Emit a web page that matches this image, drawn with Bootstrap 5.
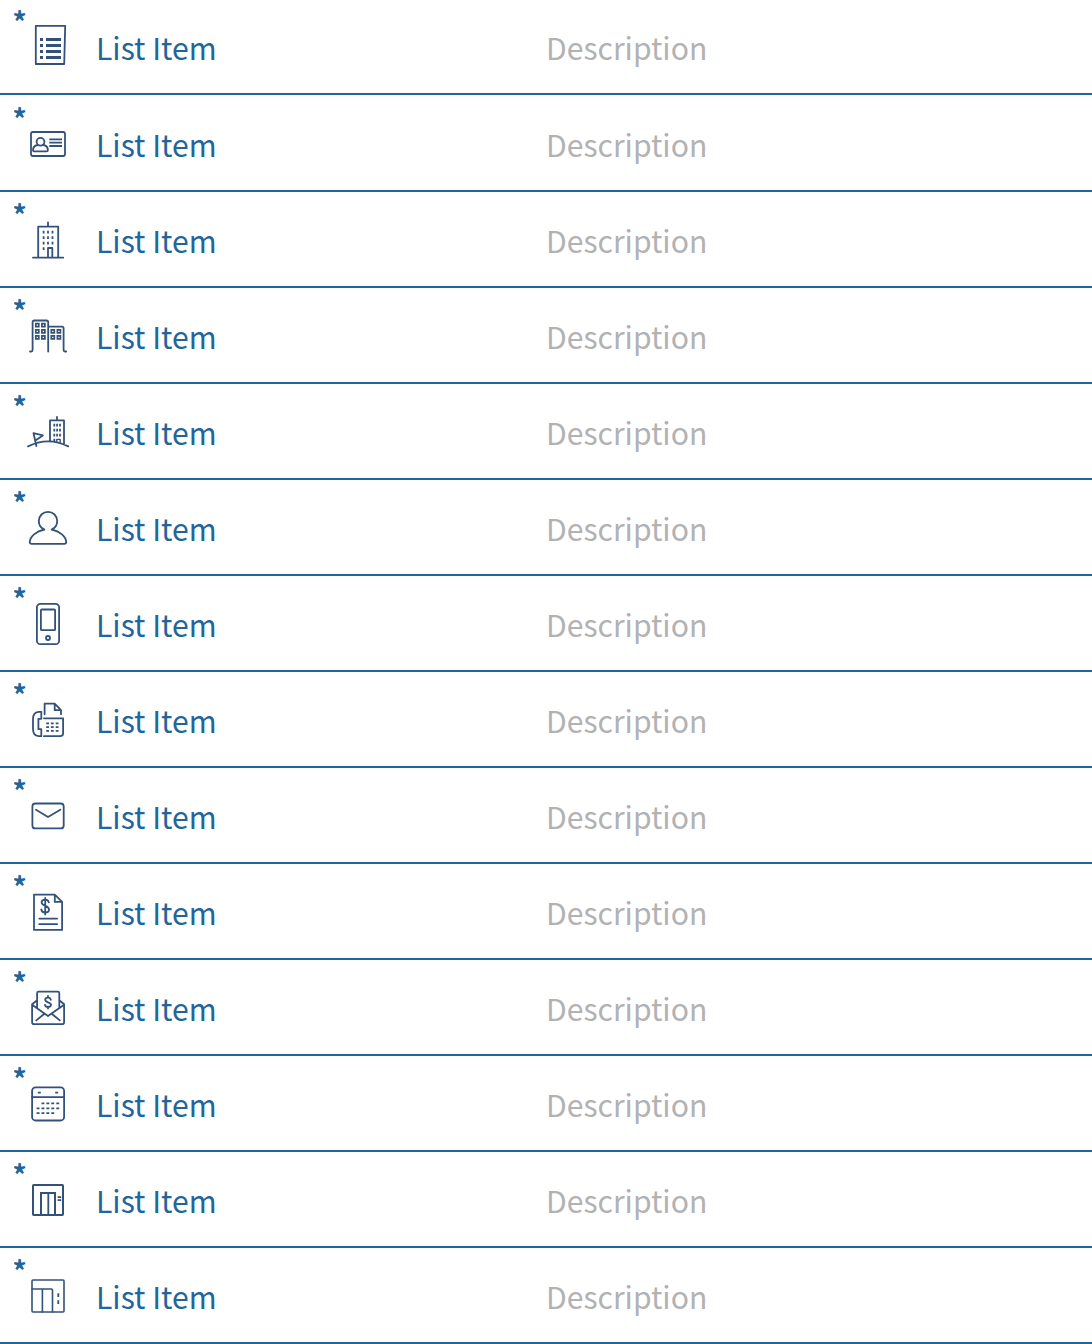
<!DOCTYPE html>
<html lang="en">
<head>
<meta charset="utf-8">
<meta name="viewport" content="width=device-width, initial-scale=1">
<title>List</title>
<link href="https://cdn.jsdelivr.net/npm/bootstrap@5.3.0/dist/css/bootstrap.min.css" rel="stylesheet">
<style>
body{font-family:"Noto Sans CJK SC","Noto Sans",sans-serif;background:#fff;overflow:hidden}
.item-list{margin-top:-1px}
.item-row{height:96px;border-bottom:2px solid #20659b;font-size:30.15px;line-height:44px}
.item-row:first-child{margin-bottom:1px}
.item-icon{width:96px;height:94px;fill:none;stroke:#33527a;stroke-width:1.8;stroke-linecap:round;stroke-linejoin:round}
.item-icon .solid{fill:#33527a;stroke:none}
.item-icon .thick{stroke-width:2;stroke-linecap:butt;stroke-linejoin:miter}
.item-icon .dash{stroke-linecap:butt;stroke-width:1.8}
.item-icon .pane{stroke-width:1.7;stroke-linejoin:miter}
.item-title{width:450px;color:#21659b;padding-top:1px}
.item-desc{color:#b2b2b2;padding-top:1px}
.req-mark{left:12.5px;top:6px;font-size:28px;line-height:32px;color:#21659b;font-weight:700}
</style>
<script src="https://cdn.jsdelivr.net/npm/bootstrap@5.3.0/dist/js/bootstrap.bundle.min.js"></script>
</head>
<body>
<ul class="item-list list-unstyled mb-0">
<li class="item-row d-flex align-items-center position-relative"><span class="req-mark position-absolute">*</span>
<svg class="item-icon flex-shrink-0" viewBox="0 0 96 94"><path d="M35.8 26.8H65.2L64.2 65H35.8Z"/><path class="solid" d="M40 39h3v3h-3zM40 45h3v3h-3zM40 51h3v3h-3zM40 57h3v3h-3zM46 39h15v3h-15zM46 45h15v3h-15zM46 51h15v3h-15zM46 57h15v3h-15z"/></svg>
<span class="item-title">List Item</span><span class="item-desc">Description</span></li>
<li class="item-row d-flex align-items-center position-relative"><span class="req-mark position-absolute">*</span>
<svg class="item-icon flex-shrink-0" viewBox="0 0 96 94"><rect x="31" y="36" width="34" height="24" rx="2"/><circle cx="40.5" cy="45.8" r="3.9"/><path d="M37.6 49Q33 50 33 54.2Q33 55.4 34.2 55.4H46.6Q47.9 55.4 47.9 54.2Q47.9 50 43.4 49"/><path class="dash" d="M49.3 43.4H62M49.3 46.7H62M49.3 50H62"/></svg>
<span class="item-title">List Item</span><span class="item-desc">Description</span></li>
<li class="item-row d-flex align-items-center position-relative"><span class="req-mark position-absolute">*</span>
<svg class="item-icon flex-shrink-0" viewBox="0 0 96 94"><path d="M48 30.3V34.5M38.2 65.6V34.6H58.2V65.6M33 65.7H63.2M48 65.6V56H52.3V65.6"/><path class="dash" d="M43.6 38.7v2.8M48 38.7v2.8M52.5 38.7v2.8M43.6 44.2v2.8M48 44.2v2.8M52.5 44.2v2.8M43.6 49.7v2.8M48 49.7v2.8M52.5 49.7v2.8M43.6 55.2v2.8"/></svg>
<span class="item-title">List Item</span><span class="item-desc">Description</span></li>
<li class="item-row d-flex align-items-center position-relative"><span class="req-mark position-absolute">*</span>
<svg class="item-icon flex-shrink-0" viewBox="0 0 96 94"><path d="M30 63.5H31.2Q32.6 63.5 32.6 62V34.3Q32.6 32.5 34.4 32.5H46.4Q48.2 32.5 48.2 34.3V63.5M48.2 38.6H61.8Q63.6 38.6 63.6 40.4V62Q63.6 63.5 65 63.5H66.2"/><path class="pane" d="M35.8 35.6h3v3h-3zM41.9 35.6h3v3h-3zM35.8 41.8h3v3h-3zM41.9 41.8h3v3h-3zM35.8 47.9h3v3h-3zM41.9 47.9h3v3h-3zM51.3 41.8h3v3h-3zM57.4 41.8h3v3h-3zM51.3 47.9h3v3h-3zM57.4 47.9h3v3h-3z"/></svg>
<span class="item-title">List Item</span><span class="item-desc">Description</span></li>
<li class="item-row d-flex align-items-center position-relative"><span class="req-mark position-absolute">*</span>
<svg class="item-icon flex-shrink-0" viewBox="0 0 96 94"><path d="M28 62.4Q48 52.2 68.3 62.4M36.4 62L33.5 49.2L42.9 51.4L35.4 56.4M50 57V36.4H64V59.8M57 33V36.4"/><path d="M56.8 58V55.4H60.2V58.6" stroke-width="1.4"/><path class="dash" d="M54.3 39.7v2.8M57.1 39.7v2.8M60 39.7v2.8M54.3 44.7v2.8M57.1 44.7v2.8M60 44.7v2.8M54.3 49.7v2.8M57.1 49.7v2.8M60 49.7v2.8M54.3 54.8v2.8"/></svg>
<span class="item-title">List Item</span><span class="item-desc">Description</span></li>
<li class="item-row d-flex align-items-center position-relative"><span class="req-mark position-absolute">*</span>
<svg class="item-icon flex-shrink-0" viewBox="0 0 96 94"><path d="M44.4 49.5C41 48 38.8 44.8 38.8 41A9.2 9.2 0 0 1 57.2 41C57.2 44.8 55 48 51.6 49.5C60 51.2 66 56.6 66.2 62Q66.2 63.8 64.4 63.8H31.6Q29.8 63.8 29.8 62C30 56.6 36 51.2 44.4 49.5"/></svg>
<span class="item-title">List Item</span><span class="item-desc">Description</span></li>
<li class="item-row d-flex align-items-center position-relative"><span class="req-mark position-absolute">*</span>
<svg class="item-icon flex-shrink-0" viewBox="0 0 96 94"><rect x="36.9" y="27.8" width="22.2" height="40.4" rx="3.5"/><rect x="40.9" y="33.5" width="14.2" height="20.7" rx=".8"/><circle cx="48" cy="62" r="2"/></svg>
<span class="item-title">List Item</span><span class="item-desc">Description</span></li>
<li class="item-row d-flex align-items-center position-relative"><span class="req-mark position-absolute">*</span>
<svg class="item-icon flex-shrink-0" viewBox="0 0 96 94"><path d="M44.6 42.3V31.7H54.7L61 38.2V42.3M54.7 31.7V38.2H61M43.9 46.3H63.1V61.3Q63.1 64.2 60.2 64.2H43.9M41.3 39.8H38.6Q33 40.4 33 47V57Q33 63.6 38.6 64.2H41.3V57.2H38.4V46.8H41.3Z"/><path class="dash" d="M46.2 51.3h2.8M50.9 51.3h2.8M55.7 51.3h2.8M46.2 55.1h2.8M50.9 55.1h2.8M55.7 55.1h2.8M46.2 58.9h2.8M50.9 58.9h2.8M55.7 58.9h2.8"/></svg>
<span class="item-title">List Item</span><span class="item-desc">Description</span></li>
<li class="item-row d-flex align-items-center position-relative"><span class="req-mark position-absolute">*</span>
<svg class="item-icon flex-shrink-0" viewBox="0 0 96 94"><rect x="32.4" y="35.5" width="31.3" height="24.9" rx="3"/><path d="M36 41.8L48 49L60.3 41.8"/></svg>
<span class="item-title">List Item</span><span class="item-desc">Description</span></li>
<li class="item-row d-flex align-items-center position-relative"><span class="req-mark position-absolute">*</span>
<svg class="item-icon flex-shrink-0" viewBox="0 0 96 94"><path d="M34 30.6H54.8L62.1 37.9V65.9H34ZM54.8 30.6V37.9H62.1M39.3 54.6H57.1M39.3 60.2H57.1M45.2 33.8V50.4M48.8 38.4C48.3 36.3 46.8 35.7 45.2 35.7C43 35.7 41.6 36.9 41.6 38.6C41.6 42.6 49 41.3 49 45.4C49 47.3 47.3 48.4 45.2 48.4C43 48.4 41.5 47.3 41.3 45.3"/></svg>
<span class="item-title">List Item</span><span class="item-desc">Description</span></li>
<li class="item-row d-flex align-items-center position-relative"><span class="req-mark position-absolute">*</span>
<svg class="item-icon flex-shrink-0" viewBox="0 0 96 94"><path d="M37.1 40.2L32.1 44.2V62.2Q32.1 64.1 34 64.1H62.2Q64.1 64.1 64.1 62.2V44.2L59.3 40.2M32.1 44.7L48 56L64.1 44.7M37.1 47.9V33.2Q37.1 31.7 38.6 31.7H57.8Q59.3 31.7 59.3 33.2V47.9M36.3 60.4L44.1 54M59.8 60.4L52 54M48 36V37.5M48 47V48.6M50.8 39.8C50.5 38.3 49.4 37.6 48 37.6C46.3 37.6 45.2 38.5 45.2 39.8C45.2 42.9 51 41.7 51 44.8C51 46.2 49.7 47 48 47C46.4 47 45.2 46.2 45 44.8"/></svg>
<span class="item-title">List Item</span><span class="item-desc">Description</span></li>
<li class="item-row d-flex align-items-center position-relative"><span class="req-mark position-absolute">*</span>
<svg class="item-icon flex-shrink-0" viewBox="0 0 96 94"><rect x="32.1" y="31.3" width="32" height="33.2" rx="3.5"/><path d="M32.1 41.2H64.1"/><path class="dash" d="M37.8 36.7h3M55.2 36.7h3M41.5 47.4h2.9M46.4 47.4h2.9M51.3 47.4h2.9M56.3 47.4h2.9M36.6 52.3h2.9M41.5 52.3h2.9M46.4 52.3h2.9M51.3 52.3h2.9M56.3 52.3h2.9M36.6 57.2h2.9M41.5 57.2h2.9M46.4 57.2h2.9M51.3 57.2h2.9"/></svg>
<span class="item-title">List Item</span><span class="item-desc">Description</span></li>
<li class="item-row d-flex align-items-center position-relative"><span class="req-mark position-absolute">*</span>
<svg class="item-icon flex-shrink-0" viewBox="0 0 96 94"><rect x="33" y="33" width="30" height="30" rx=".7" stroke-width="2"/><path class="thick" d="M41 63V41H55V63"/><path d="M48.3 42V63" stroke-width="1.8"/><path class="dash" d="M57.6 45.1h3.6M57.6 48.1h3.6"/></svg>
<span class="item-title">List Item</span><span class="item-desc">Description</span></li>
<li class="item-row d-flex align-items-center position-relative"><span class="req-mark position-absolute">*</span>
<svg class="item-icon flex-shrink-0" viewBox="0 0 96 94"><rect x="32" y="32" width="32" height="32" rx="1" stroke-width="1.6"/><path d="M32 41H51.3Q52.5 41 52.5 42.2V64M42.4 41V64" stroke-width="1.6"/><path class="dash" d="M58.3 45.2v3.8M58.3 52.2v3.8"/></svg>
<span class="item-title">List Item</span><span class="item-desc">Description</span></li>
</ul>
</body>
</html>
